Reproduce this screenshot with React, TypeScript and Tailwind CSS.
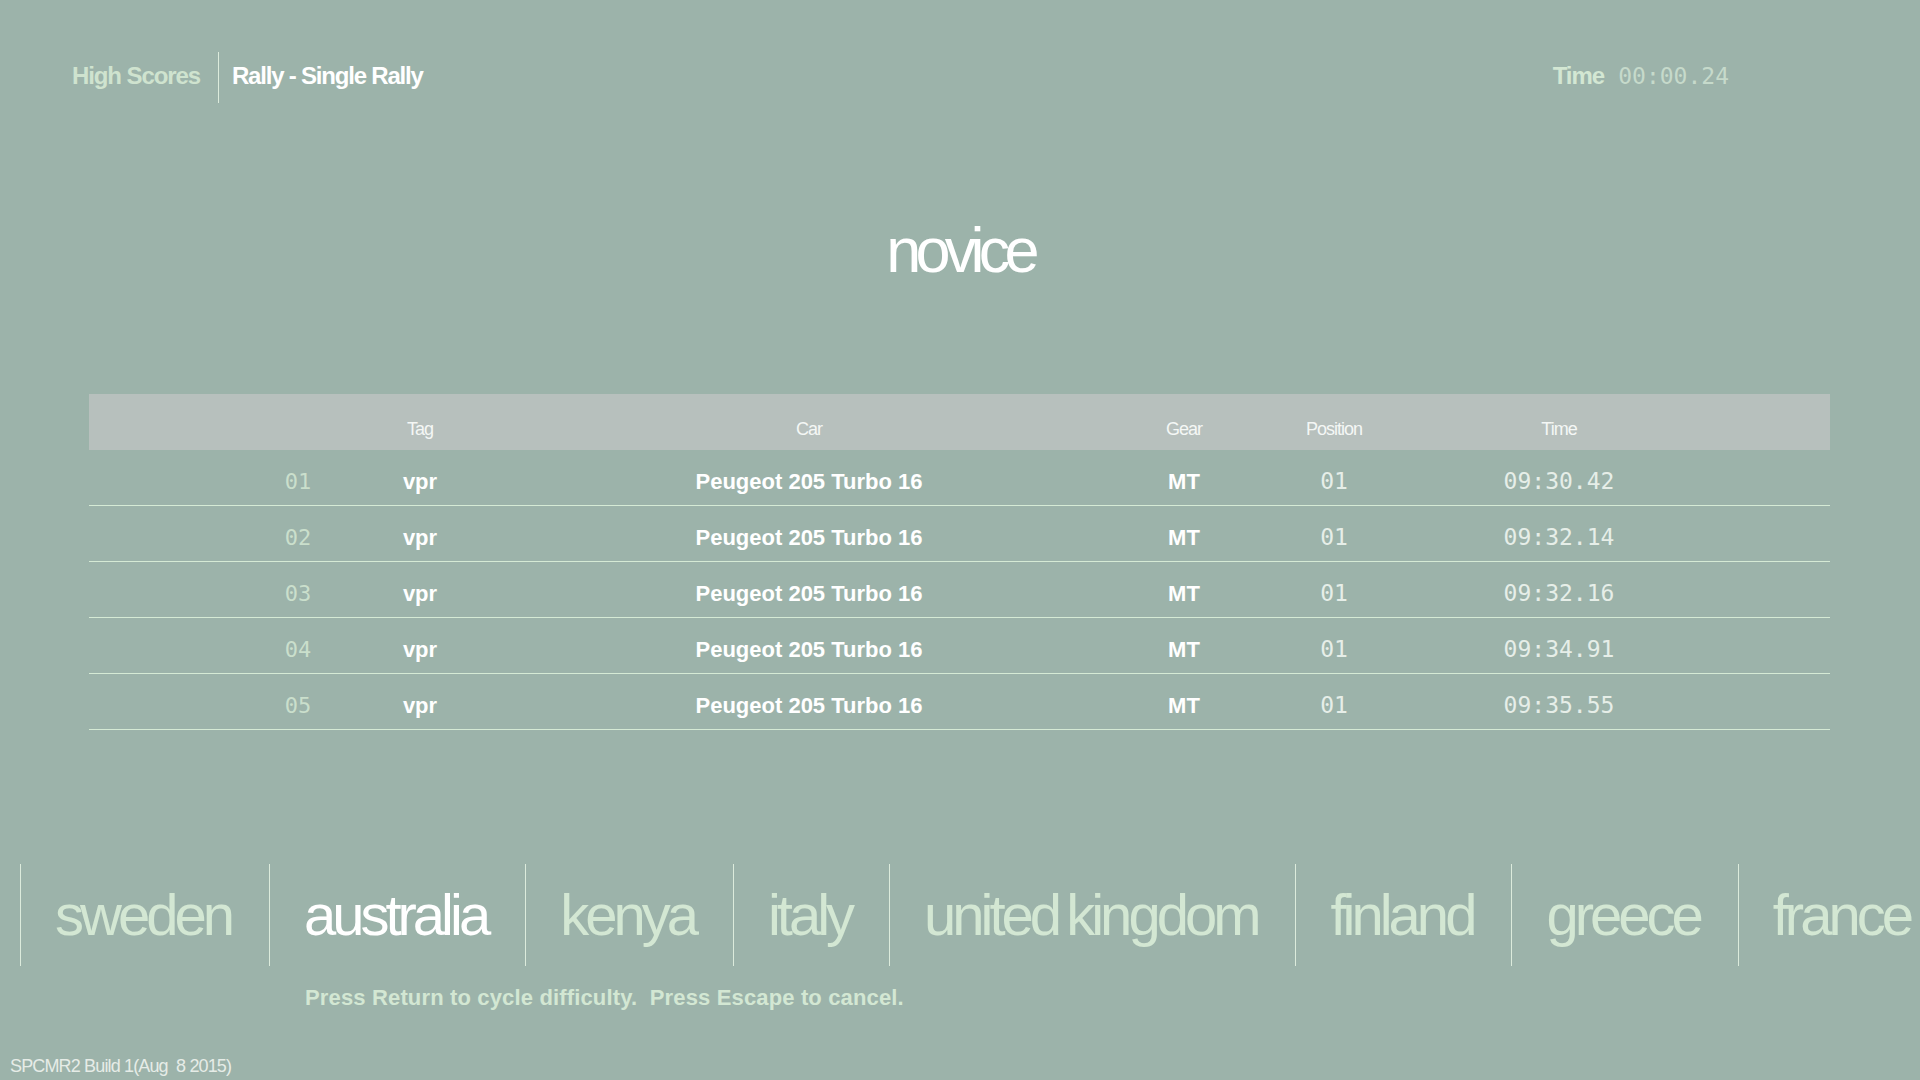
import React from "react";

const rows = [
  { rank: "01", tag: "vpr", car: "Peugeot 205 Turbo 16", gear: "MT", pos: "01", time: "09:30.42" },
  { rank: "02", tag: "vpr", car: "Peugeot 205 Turbo 16", gear: "MT", pos: "01", time: "09:32.14" },
  { rank: "03", tag: "vpr", car: "Peugeot 205 Turbo 16", gear: "MT", pos: "01", time: "09:32.16" },
  { rank: "04", tag: "vpr", car: "Peugeot 205 Turbo 16", gear: "MT", pos: "01", time: "09:34.91" },
  { rank: "05", tag: "vpr", car: "Peugeot 205 Turbo 16", gear: "MT", pos: "01", time: "09:35.55" },
];

const countries = ["sweden", "australia", "kenya", "italy", "united kingdom", "finland", "greece", "france"];

const sans = { fontFamily: '"Liberation Sans", Arial, sans-serif' };
const mono = { fontFamily: '"DejaVu Sans Mono", "Liberation Mono", monospace' };

export default function App() {
  return (
    <div
      className="w-[1920px] h-[1080px] bg-[#9cb3aa] overflow-hidden flex flex-col"
      style={sans}
    >
      {/* Top bar */}
      <div className="mt-[52px] h-[51px] flex items-center justify-between pr-[191px]">
        <div className="flex items-center h-full">
          <div className="pl-[72px] pr-[18px] pb-[4px] text-[24px] font-bold tracking-[-1.1px] text-[#cfe3cf] leading-none">
            High Scores
          </div>
          <div className="h-full border-l border-[#dcebdc]" />
          <div className="pl-[13px] pb-[4px] text-[24px] font-bold tracking-[-1.2px] text-white leading-none">
            Rally - Single Rally
          </div>
        </div>
        <div className="flex items-center gap-[14px] pb-[3px]">
          <span className="text-[24px] font-bold tracking-[-1px] text-[#d3e7d3] leading-none">Time</span>
          <span className="text-[23px] text-[#c6dacb] leading-none" style={mono}>
            00:00.24
          </span>
        </div>
      </div>

      {/* Difficulty */}
      <div className="mt-[116px] h-[63px] text-center text-[63px] leading-none text-white tracking-[-5.8px]">
        novice
      </div>

      {/* Table */}
      <div className="mt-[112px] ml-[89px] w-[1741px]">
        <div className="h-[56px] bg-[#b7c0bd] grid grid-cols-[149px_120px_124px_654px_96px_204px_246px_1fr] items-center text-[18px] tracking-[-1px] text-[#f4f7f5] pt-[14px]">
          <div />
          <div />
          <div className="text-center">Tag</div>
          <div className="text-center">Car</div>
          <div className="text-center">Gear</div>
          <div className="text-center">Position</div>
          <div className="text-center">Time</div>
          <div />
        </div>
        {rows.map((r) => (
          <div
            key={r.rank}
            className="h-[56px] border-b border-[#d5ead5] grid grid-cols-[149px_120px_124px_654px_96px_204px_246px_1fr] items-center pt-[8px]"
          >
            <div />
            <div className="text-center text-[22px] text-[#cadfcc]" style={mono}>
              {r.rank}
            </div>
            <div className="text-center text-[22px] font-bold text-white">{r.tag}</div>
            <div className="text-center text-[22px] font-bold text-white">{r.car}</div>
            <div className="text-center text-[22px] font-bold text-white">{r.gear}</div>
            <div className="text-center text-[23px] text-[#e6eee8]" style={mono}>
              {r.pos}
            </div>
            <div className="text-center text-[23px] text-[#e6eee8]" style={mono}>
              {r.time}
            </div>
            <div />
          </div>
        ))}
      </div>

      {/* Countries */}
      <div className="mt-[134px] ml-[20px] h-[102px] flex whitespace-nowrap">
        {countries.map((c) => (
          <div
            key={c}
            className="h-full flex items-center border-l border-[#dcebdc] pl-[34px] pr-[38px] shrink-0"
          >
            <span
              className={
                "text-[58px] leading-none tracking-[-4px] [word-spacing:-4px] " +
                (c === "australia" ? "text-white" : "text-[#d3e7d3]")
              }
            >
              {c}
            </span>
          </div>
        ))}
      </div>

      {/* Hint */}
      <div className="mt-[21px] pl-[305px] text-[22px] font-bold tracking-[0.15px] text-[#d3e7d3] leading-none whitespace-pre">
        {"Press Return to cycle difficulty.  Press Escape to cancel."}
      </div>

      {/* Footer */}
      <div className="mt-[48px] pl-[10px] text-[18px] tracking-[-0.85px] text-[#e6ece7] leading-none whitespace-pre">
        {"SPCMR2 Build 1(Aug  8 2015)"}
      </div>
    </div>
  );
}
